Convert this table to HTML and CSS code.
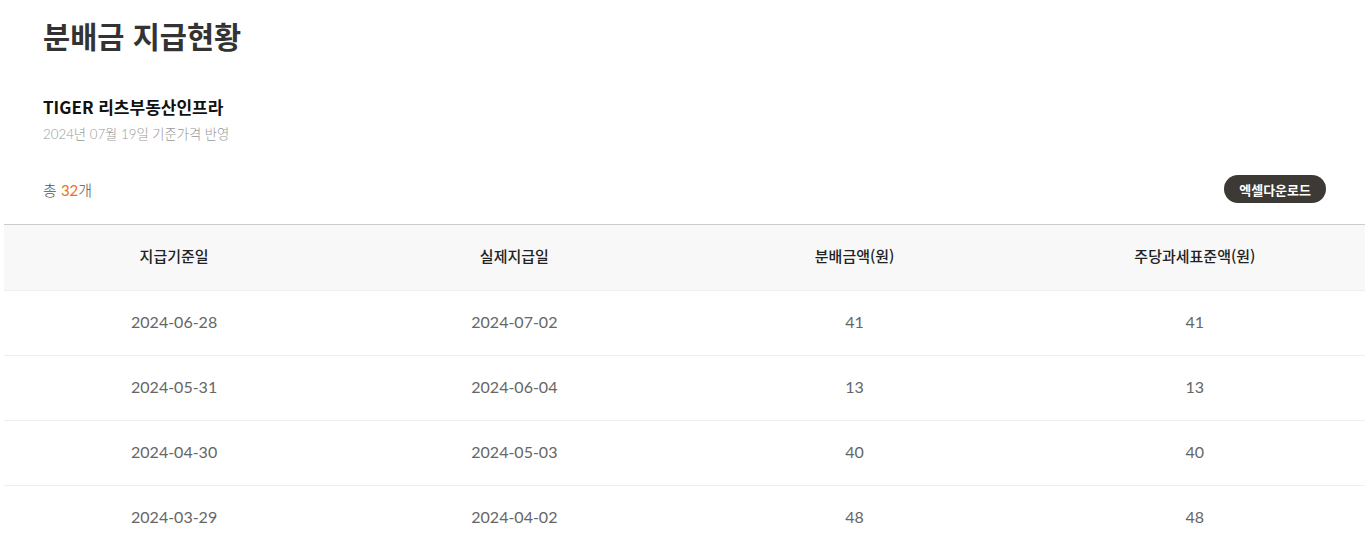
FILE: index.html
```html
<!DOCTYPE html>
<html lang="ko">
<head>
  <meta charset="UTF-8">
  <meta name="viewport" content="width=device-width, initial-scale=1.0">
  <title>분배금 지급현황</title>
  <link rel="stylesheet" href="styles.css">
</head>
<body>
  <div class="wrap">
    <div class="head">
      <h1>분배금 지급현황</h1>
      <h2 class="fund-name">TIGER 리츠부동산인프라</h2>
      <p class="base-date">2024년 07월 19일 기준가격 반영</p>
      <div class="toolbar">
        <p class="total">총 <em>32</em>개</p>
        <button class="btn-excel">엑셀다운로드</button>
      </div>
    </div>

    <table class="dist-table">
      <thead>
        <tr>
          <th>지급기준일</th>
          <th>실제지급일</th>
          <th>분배금액(원)</th>
          <th>주당과세표준액(원)</th>
        </tr>
      </thead>
      <tbody>
        <tr><td>2024-06-28</td><td>2024-07-02</td><td>41</td><td>41</td></tr>
        <tr><td>2024-05-31</td><td>2024-06-04</td><td>13</td><td>13</td></tr>
        <tr><td>2024-04-30</td><td>2024-05-03</td><td>40</td><td>40</td></tr>
        <tr><td>2024-03-29</td><td>2024-04-02</td><td>48</td><td>48</td></tr>
      </tbody>
    </table>
  </div>
</body>
</html>
```

FILE: styles.css
```css
* {
  box-sizing: border-box;
  margin: 0;
  padding: 0;
}

body {
  font-family: 'Lato', 'Noto Sans CJK KR', sans-serif;
  background: #fff;
  color: #333;
}

.wrap {
  padding: 0 4px;
}

.head {
  padding: 0 39px;
}

h1 {
  font-family: 'Noto Sans CJK KR', sans-serif;
  font-size: 29.5px;
  font-weight: 700;
  color: #333;
  line-height: 44px;
  padding-top: 13px;
}

.fund-name {
  font-family: 'Noto Sans CJK KR', sans-serif;
  font-size: 17px;
  font-weight: 700;
  color: #111;
  line-height: 26px;
  margin-top: 37px;
}

.base-date {
  font-size: 13.3px;
  font-weight: 300;
  color: #999;
  line-height: 20px;
  margin-top: 4px;
}

.toolbar {
  display: flex;
  justify-content: space-between;
  align-items: center;
  margin-top: 30px;
  height: 30px;
}

.total {
  font-size: 15px;
  font-weight: 300;
  color: #555;
}

.total em {
  font-style: normal;
  font-weight: 400;
  color: #f26f12;
}

.btn-excel {
  font-family: 'Noto Sans CJK KR', sans-serif;
  background: #3d3935;
  color: #fff;
  border: none;
  border-radius: 14px;
  height: 28px;
  padding: 0 15px;
  font-size: 13px;
  font-weight: 700;
  cursor: pointer;
}

.dist-table {
  width: 100%;
  border-collapse: collapse;
  table-layout: fixed;
  margin-top: 20px;
  border-top: 1px solid #ccc;
}

.dist-table th {
  font-family: 'Noto Sans CJK KR', sans-serif;
  background: #f8f8f8;
  font-size: 15px;
  font-weight: 500;
  color: #222;
  height: 66px;
  padding-bottom: 4px;
  border-bottom: 1px solid #eee;
}

.dist-table td {
  text-align: center;
  font-size: 16px;
  color: #666;
  height: 65px;
  padding-bottom: 4px;
  border-bottom: 1px solid #eee;
}
```
